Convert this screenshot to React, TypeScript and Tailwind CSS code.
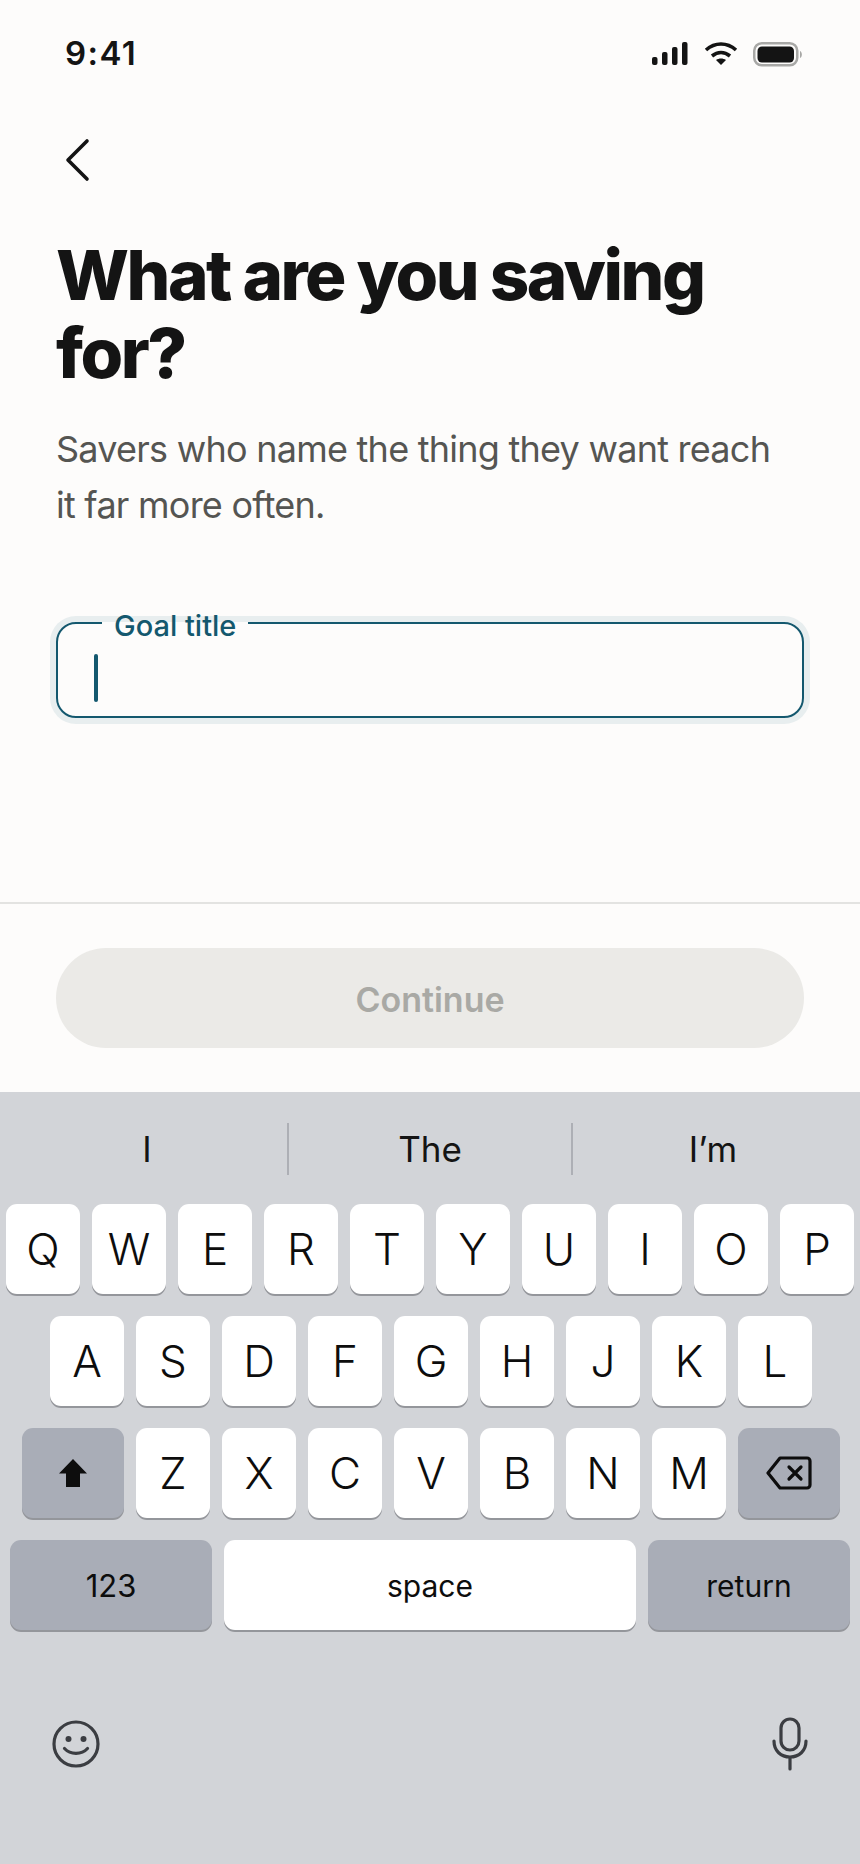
import React from "react";

const font = "font-['Inter','Liberation_Sans',sans-serif]";

function Key({ c, w = "w-[74px]", dark = false, cls = "text-[44px] font-[350]" }: { c: React.ReactNode; w?: string; dark?: boolean; cls?: string }) {
  return (
    <div className={`${w} h-[90px] rounded-[11px] flex items-center justify-center text-[#0d0d0d] shadow-[0_2px_0_#94969b] ${cls} ${dark ? "bg-[#a9adb7]" : "bg-white"}`}>
      {c}
    </div>
  );
}

export default function App() {
  const row = (s: string) => s.split("").map((k) => <Key key={k} c={k} />);
  return (
    <div className={`w-[860px] h-[1864px] bg-[#fdfcfb] flex flex-col overflow-hidden ${font}`}>
      <div className="h-[107px] flex items-center justify-between pl-[65px] pr-[57px] pt-[1px]">
        <span className="text-[33px] font-semibold text-[#141414] tracking-[1.4px]">9:41</span>
        <div className="flex items-center">
          <svg width="36" height="24" viewBox="0 0 36 24" fill="#141414">
            <rect x="0" y="15" width="5.500" height="8" rx="2" />
            <rect x="10" y="10" width="5.500" height="13" rx="2" />
            <rect x="20" y="5" width="5.500" height="18" rx="2" />
            <rect x="30" y="0" width="5.500" height="23" rx="2" />
          </svg>
          <svg className="ml-[16px] mb-[2px]" width="34" height="23" viewBox="0 0 34 23" fill="none" stroke="#141414" strokeWidth="3.6">
            <path d="M2 8c9-8 21-8 30 0" />
            <path d="M8 14c5.500-4.500 12.500-4.500 18 0" />
            <path d="M17 23l-5-5c3-2 7-2 10 0z" fill="#141414" stroke="none" />
          </svg>
          <svg className="ml-[15px]" width="50" height="25" viewBox="0 0 50 25" fill="none">
            <rect x="1.250" y="1.250" width="43" height="22" rx="7.500" stroke="#a8a8a6" strokeWidth="2.500" />
            <rect x="4.500" y="4.500" width="36.500" height="16" rx="4.500" fill="#141414" />
            <path d="M47 9c2.500 1 2.500 6 0 7z" fill="#a8a8a6" />
          </svg>
        </div>
      </div>

      <div className="pl-[56px] pr-[56px] flex-1 flex flex-col">
        <svg className="mt-[30px] ml-[8px]" width="30" height="46" viewBox="0 0 30 46" fill="none" stroke="#141414" strokeWidth="3.6" strokeLinecap="round" strokeLinejoin="round">
          <path d="M23 4L4 23l19 19" />
        </svg>
        <h1 className="mt-[53px] text-[69px] leading-[78px] font-extrabold text-[#141414] tracking-[-2.5px]">
          What are you saving for?
        </h1>
        <p className="mt-[29px] text-[36px] leading-[56px] text-[#555552] tracking-[-0.75px] w-[740px]">
          Savers who name the thing they want reach it far more often.
        </p>
        <div className="relative mt-[89px] h-[96px] rounded-[20px] border-2 border-[#14586e] shadow-[0_0_0_6px_#e8eeef] flex items-center pl-[36px]">
          <div className="w-[4px] h-[48px] mt-[16px] rounded-full bg-[#14586e]" />
          <div className="absolute left-[44px] top-[-2px] w-[146px] h-[14px] bg-[#fdfcfb]" />
          <span className="absolute left-[56px] top-[-15px] text-[29px] leading-[34px] font-medium text-[#14586e]">Goal title</span>
        </div>
      </div>

      <div className="h-[190px] border-t-2 border-[#e3e3e1] px-[56px] pt-[44px]">
        <div className="h-[100px] pt-[2px] rounded-full bg-[#ebeae7] flex items-center justify-center text-[34px] font-semibold text-[#a9a9a5]">Continue</div>
      </div>

      <div className="h-[772px] bg-[#d2d4d8] flex flex-col">
        <div className="h-[112px] flex items-center pt-[2px] text-[35px] text-[#141414]">
          <div className="flex-1 h-[52px] pl-[7px] flex items-center justify-center border-r-2 border-[#adafb5]">I</div>
          <div className="w-[284px] h-[52px] flex items-center justify-center border-r-2 border-[#adafb5]">The</div>
          <div className="flex-1 h-[52px] pr-[7px] flex items-center justify-center">I’m</div>
        </div>
        <div className="flex flex-col gap-[22px]">
          <div className="flex justify-center gap-[12px]">{row("QWERTYUIOP")}</div>
          <div className="flex justify-center gap-[12px] pl-[2px]">{row("ASDFGHJKL")}</div>
          <div className="flex justify-between pl-[22px] pr-[20px]">
            <Key w="w-[102px]" dark c={
              <svg width="30" height="30" viewBox="0 0 30 30" fill="#0d0d0d"><path d="M15 1L1 15.500H8V29H22V15.500H29z" /></svg>
            } />
            <div className="flex gap-[12px]">{row("ZXCVBNM")}</div>
            <Key w="w-[102px]" dark c={
              <svg width="46" height="34" viewBox="0 0 46 34" fill="none" stroke="#0d0d0d" strokeWidth="3.200" strokeLinejoin="round" strokeLinecap="round">
                <path d="M14 2H41a3 3 0 0 1 3 3V29a3 3 0 0 1-3 3H14L2 17z" />
                <path d="M23 11l12 12M35 11L23 23" />
              </svg>
            } />
          </div>
          <div className="flex gap-[12px] px-[10px]">
            <Key w="w-[202px]" dark c="123" cls="text-[31px] pt-[2px]" />
            <Key w="w-[412px]" c="space" cls="text-[30px] pt-[2px]" />
            <Key w="w-[202px]" dark c="return" cls="text-[30px] pt-[2px]" />
          </div>
        </div>
        <div className="flex-1 flex items-center justify-between pl-[52px] pr-[52px] pb-[6px]">
          <svg width="48" height="48" viewBox="0 0 48 48" fill="none" stroke="#3b3d42" strokeWidth="3.200" strokeLinecap="round">
            <circle cx="24" cy="24" r="22" />
            <path d="M12.500 28.500c6 6.500 17 6.500 23 0" />
            <circle cx="16.500" cy="19" r="3" fill="#3b3d42" stroke="none" />
            <circle cx="31.500" cy="19" r="3" fill="#3b3d42" stroke="none" />
          </svg>
          <svg width="36" height="54" viewBox="0 0 36 54" fill="none" stroke="#3b3d42" strokeWidth="3.200" strokeLinecap="round">
            <rect x="9" y="2" width="18" height="31" rx="9" />
            <path d="M2 24c0 10 7 16 16 16s16-6 16-16M18 40v12" />
          </svg>
        </div>
      </div>
    </div>
  );
}
